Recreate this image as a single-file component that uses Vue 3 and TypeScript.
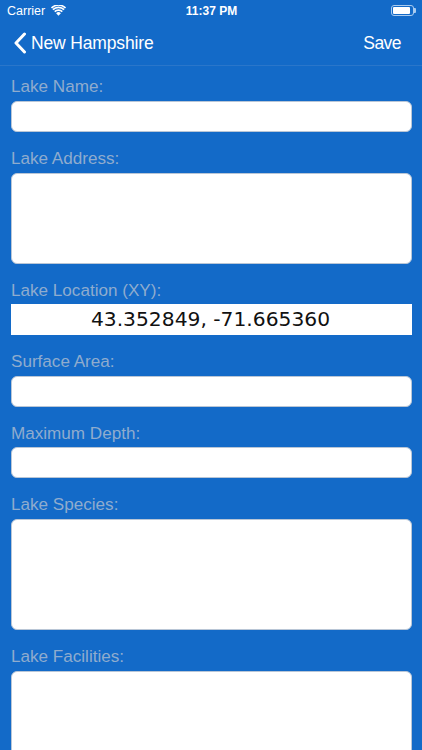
<script setup lang="ts">
interface Field {
  label: string
  height: number
  value?: string
}

const fields: Field[] = [
  { label: 'Lake Name:', height: 31 },
  { label: 'Lake Address:', height: 91 },
  { label: 'Lake Location (XY):', height: 30.5, value: '43.352849, -71.665360' },
  { label: 'Surface Area:', height: 31 },
  { label: 'Maximum Depth:', height: 30.75 },
  { label: 'Lake Species:', height: 111 },
  { label: 'Lake Facilities:', height: 120 }
]
</script>

<template>
  <div class="screen">
    <div class="status">
      <div class="status-left">
        <span>Carrier</span>
        <svg class="wifi" width="15" height="11" viewBox="0 0 15 11">
          <path d="M7.5 10.8 5.1 8.2a3.4 3.4 0 0 1 4.8 0z" fill="#fff" />
          <path d="M3.7 6.7a5.4 5.4 0 0 1 7.6 0" fill="none" stroke="#fff" stroke-width="1.7" />
          <path d="M1.9 4.7a8 8 0 0 1 11.2 0" fill="none" stroke="#fff" stroke-width="1.7" />
          <path d="M.5 2.9a10 10 0 0 1 14 0" fill="none" stroke="#fff" stroke-width="1.5" />
        </svg>
      </div>
      <span class="time">11:37 PM</span>
      <div class="battery"><div class="battery-fill"></div></div>
    </div>
    <div class="nav">
      <div class="back">
        <svg width="14" height="22" viewBox="0 0 14 22">
          <path d="M11.5 2 3 11l8.5 9" fill="none" stroke="#fff" stroke-width="3" stroke-linecap="round" stroke-linejoin="round" />
        </svg>
        <span class="back-text">New Hampshire</span>
      </div>
      <span class="save">Save</span>
    </div>
    <div class="form">
      <div v-for="field in fields" :key="field.label" class="field">
        <div class="label">{{ field.label }}</div>
        <div v-if="field.value" class="value" :style="{ height: field.height + 'px' }">{{ field.value }}</div>
        <div v-else class="box" :style="{ height: field.height + 'px' }"></div>
      </div>
    </div>
  </div>
</template>

<style>
html, body { margin: 0; overflow: hidden; }
</style>

<style scoped>
.screen {
  width: 422px;
  height: 750px;
  overflow: hidden;
  background: #136ac8;
  font-family: "Liberation Sans", Arial, sans-serif;
  color: #fff;
}
.status {
  height: 21px;
  padding: 0 8px 0 7px;
  display: flex;
  align-items: center;
  justify-content: space-between;
  position: relative;
  font-size: 12.5px;
}
.status-left { display: flex; align-items: center; gap: 6px; }
.time {
  position: absolute;
  left: 1px;
  right: 0;
  text-align: center;
  font-weight: 700;
  font-size: 12px;
}
.battery {
  position: relative;
  width: 23px;
  height: 11px;
  box-sizing: border-box;
  border: 1px solid #a9cbef;
  border-radius: 3px;
  padding: 1px;
}
.battery::after {
  content: "";
  position: absolute;
  left: 22px;
  top: 2px;
  width: 1.5px;
  height: 5px;
  background: #a9cbef;
  border-radius: 0 1px 1px 0;
}
.battery-fill { width: 17px; height: 7px; background: #fff; border-radius: 1px; }
.nav {
  height: 45px;
  box-sizing: border-box;
  display: flex;
  align-items: center;
  justify-content: space-between;
  padding: 0 21px 0 13px;
  border-bottom: 1px solid #2a76ca;
  font-size: 17.5px;
}
.back { display: flex; align-items: center; gap: 4px; }
.back-text { letter-spacing: -0.15px; }
.save { font-size: 17.5px; letter-spacing: -0.55px; }
.form {
  display: flex;
  flex-direction: column;
  gap: 16px;
  padding: 10px 10px 0 11px;
}
.field { display: flex; flex-direction: column; gap: 3.75px; }
.label {
  height: 21px;
  line-height: 21px;
  font-size: 17.1px;
  color: #8facce;
}
.box {
  flex: none;
  box-sizing: border-box;
  background: #fff;
  border: 1px solid #b9c6d6;
  border-radius: 6px;
}
.value {
  flex: none;
  box-sizing: border-box;
  background: #fff;
  color: #111;
  text-align: center;
  font-family: "DejaVu Sans", Verdana, sans-serif;
  font-size: 20.25px;
  line-height: 30px;
  padding-right: 2px;
}
</style>
